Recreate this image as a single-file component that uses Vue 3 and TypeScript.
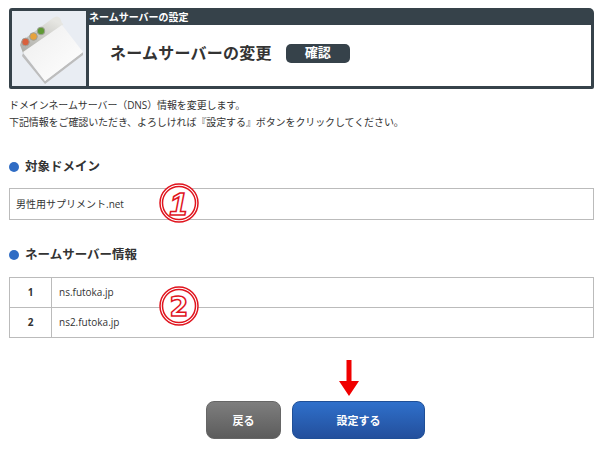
<script setup lang="ts">
const servers = [
  { id: 1, host: 'ns.futoka.jp' },
  { id: 2, host: 'ns2.futoka.jp' },
]
</script>

<template>
  <div class="page">
    <header class="head">
      <div class="icon-box">
        <svg width="74" height="75" viewBox="0 0 74 75">
          <defs>
            <linearGradient id="tab" x1="0" y1="1" x2="0.6" y2="0">
              <stop offset="0" stop-color="#a8a8a2" />
              <stop offset="1" stop-color="#e6e6e2" />
            </linearGradient>
            <linearGradient id="sheet" x1="0" y1="0" x2="1" y2="1">
              <stop offset="0" stop-color="#eeeeee" />
              <stop offset="1" stop-color="#ffffff" />
            </linearGradient>
          </defs>
          <path d="M11 42 L33 70 L71 41 L71 44 L33 73 L10 45 Z" fill="#bdbdbd" />
          <path d="M8 34 Q8 31 11 29 L41 7 Q45 4 48 7 L50 12 Q52 13 51 14 L11 42 Z" fill="url(#tab)" />
          <path d="M11 41 L50 14 L71 41 L33 70 Z" fill="url(#sheet)" />
          <circle cx="13.500" cy="31" r="3.800" fill="#d9603c" stroke="#9f9f98" />
          <circle cx="21.500" cy="25.500" r="3.800" fill="#e6a23c" stroke="#9f9f98" />
          <circle cx="29" cy="20" r="3.800" fill="#5f9a35" stroke="#9f9f98" />
        </svg>
      </div>
      <div class="head-main">
        <div class="head-label">ネームサーバーの設定</div>
        <div class="head-title">
          <h1>ネームサーバーの変更</h1>
          <span class="badge">確認</span>
        </div>
      </div>
    </header>

    <p class="intro">
      ドメインネームサーバー（DNS）情報を変更します。<br />
      下記情報をご確認いただき、よろしければ『設定する』ボタンをクリックしてください。
    </p>

    <h2 class="sec first">対象ドメイン</h2>
    <div class="domain">
      男性用サプリメント.net
      <svg class="mark mark1" width="42" height="42" viewBox="0 0 42 42">
        <circle cx="21" cy="21" r="19" fill="#fff" stroke="#e0141e" stroke-width="1.500" />
        <circle cx="21" cy="21" r="16.500" fill="#fff" stroke="#e0141e" stroke-width="1.500" />
        <text x="20.500" y="32.500" class="num one">1</text>
      </svg>
    </div>

    <h2 class="sec second">ネームサーバー情報</h2>
    <div class="table-wrap">
      <table>
        <tbody>
          <tr v-for="s in servers" :key="s.id">
            <th>{{ s.id }}</th>
            <td>{{ s.host }}</td>
          </tr>
        </tbody>
      </table>
      <svg class="mark mark2" width="42" height="42" viewBox="0 0 42 42">
        <circle cx="21" cy="21" r="19" fill="#fff" stroke="#e0141e" stroke-width="1.500" />
        <circle cx="21" cy="21" r="16.500" fill="#fff" stroke="#e0141e" stroke-width="1.500" />
        <text x="21" y="31" class="num two">2</text>
      </svg>
    </div>

    <div class="actions">
      <button class="btn back" type="button">戻る</button>
      <div class="submit-wrap">
        <svg class="arrow" width="20" height="36" viewBox="0 0 20 36">
          <path d="M7.500 0 H12.500 V21 H20 L10 36 L0 21 H7.500 Z" fill="#f00000" />
        </svg>
        <button class="btn submit" type="button">設定する</button>
      </div>
    </div>
  </div>
</template>

<style>
html, body { margin: 0; background: #fff; }
</style>

<style scoped>
.page {
  width: 600px;
  height: 452px;
  overflow: hidden;
  box-sizing: border-box;
  padding: 8px 6px 0 9px;
  font-family: "Open Sans", "Noto Sans CJK JP", sans-serif;
  color: #333;
}
.head {
  display: flex;
  gap: 3px;
  height: 81px;
  box-sizing: border-box;
  background: #36424a;
  border-radius: 3px 5px 2px 2px;
  padding: 3px;
}
.icon-box {
  width: 74px;
  height: 75px;
  background: #e9edf3;
  flex: none;
}
.head-main { flex: 1; display: flex; flex-direction: column; min-width: 0; }
.head-label {
  height: 14px;
  line-height: 12px;
  font-size: 10px;
  font-weight: 700;
  color: #fff;
}
.head-title {
  flex: 1;
  background: #fff;
  display: flex;
  align-items: center;
  gap: 14px;
  padding: 0 0 5px 21px;
  box-sizing: border-box;
}
h1 {
  margin: 0;
  font-size: 16px;
  letter-spacing: 0.25px;
  line-height: 20px;
  font-weight: 700;
  color: #333;
}
.badge {
  width: 64px;
  height: 19px;
  line-height: 17px;
  border-radius: 5px;
  background: #36424a;
  color: #fff;
  text-align: center;
  font-size: 13px;
  font-weight: 700;
}
.intro {
  margin: 8px 0 0;
  font-size: 10px;
  letter-spacing: -0.1px;
  line-height: 17px;
  color: #333;
}
.sec {
  margin: 0;
  font-size: 12.5px;
  line-height: 18px;
  font-weight: 700;
  color: #333;
  display: flex;
  align-items: center;
  gap: 6px;
}
.sec::before {
  content: "";
  width: 10px;
  height: 10px;
  border-radius: 50%;
  background: #2f6cc4;
}
.sec.first { margin-top: 27px; }
.sec.second { margin-top: 26px; }
.domain {
  position: relative;
  margin-top: 12px;
  height: 32px;
  box-sizing: border-box;
  border: 1px solid #bbb;
  padding-left: 6px;
  line-height: 30px;
  font-size: 10px;
}
.mark { position: absolute; }
.mark1 { left: 148px; top: -7px; }
.mark2 { left: 149px; top: 8px; }
.num {
  font-weight: 700;
  text-anchor: middle;
  fill: #fff;
  stroke: #e0141e;
  stroke-width: 1.5px;
}
.one {
  font-family: "Liberation Sans", sans-serif;
  font-size: 32px;
  font-style: italic;
}
.two {
  font-family: "DejaVu Sans", sans-serif;
  font-size: 27px;
}
.table-wrap { position: relative; margin-top: 13px; }
table {
  width: 100%;
  border-collapse: collapse;
  font-size: 10px;
}
th, td {
  height: 27px;
  padding: 0 0 2px;
  border: 1px solid #bbb;
}
th { width: 41px; font-weight: 700; text-align: center; }
td { padding-left: 7px; }
.actions {
  display: flex;
  justify-content: center;
  gap: 11px;
  margin-top: 63px;
  padding-left: 28px;
}
.submit-wrap { position: relative; }
.arrow { position: absolute; left: 47px; top: -41px; }
.btn {
  display: block;
  height: 38px;
  border-radius: 8px;
  color: #fff;
  font-family: inherit;
  font-size: 11px;
  font-weight: 700;
  padding: 0;
}
.back {
  width: 75px;
  border: 1px solid #666;
  background: linear-gradient(#7e7e7e, #5c5c5c);
}
.submit {
  width: 133px;
  border: 1px solid #1f4f97;
  background: linear-gradient(#2f70cb, #234f9c);
}
</style>
